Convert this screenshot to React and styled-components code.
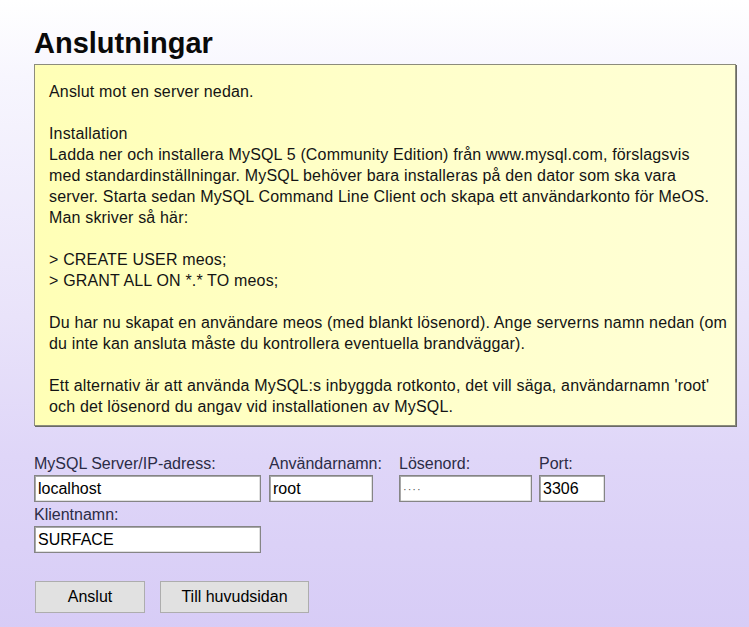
import React from "react";
import styled, { createGlobalStyle } from "styled-components";

const GlobalStyle = createGlobalStyle`
  html, body, #root {
    margin: 0;
    padding: 0;
    height: 100%;
  }
  body {
    font-family: "Liberation Sans", Arial, sans-serif;
  }
`;

const infoLines = [
  "Anslut mot en server nedan.",
  "",
  "Installation",
  "Ladda ner och installera MySQL 5 (Community Edition) från www.mysql.com, förslagsvis",
  "med standardinställningar. MySQL behöver bara installeras på den dator som ska vara",
  "server. Starta sedan MySQL Command Line Client och skapa ett användarkonto för MeOS.",
  "Man skriver så här:",
  "",
  "> CREATE USER meos;",
  "> GRANT ALL ON *.* TO meos;",
  "",
  "Du har nu skapat en användare meos (med blankt lösenord). Ange serverns namn nedan (om",
  "du inte kan ansluta måste du kontrollera eventuella brandväggar).",
  "",
  "Ett alternativ är att använda MySQL:s inbyggda rotkonto, det vill säga, användarnamn 'root'",
  "och det lösenord du angav vid installationen av MySQL.",
];

function App() {
  return (
    <>
      <GlobalStyle />
      <Page>
        <Title>Anslutningar</Title>
        <InfoBox>
          {infoLines.map((line, i) => (
            <InfoLine key={i}>{line || "\u00a0"}</InfoLine>
          ))}
        </InfoBox>

        <FieldRow>
          <Field w={235}>
            <Label>MySQL Server/IP-adress:</Label>
            <Input w={227} defaultValue="localhost" />
          </Field>
          <Field w={130}>
            <Label>Användarnamn:</Label>
            <Input w={104} defaultValue="root" />
          </Field>
          <Field w={140}>
            <Label>Lösenord:</Label>
            <Input w={133} defaultValue="····" masked />
          </Field>
          <Field w={70}>
            <Label>Port:</Label>
            <Input w={66} defaultValue="3306" />
          </Field>
        </FieldRow>

        <FieldRow second>
          <Field w={235}>
            <Label>Klientnamn:</Label>
            <Input w={227} defaultValue="SURFACE" />
          </Field>
        </FieldRow>

        <ButtonRow>
          <Button w={110}>Anslut</Button>
          <Button w={149}>Till huvudsidan</Button>
        </ButtonRow>
      </Page>
    </>
  );
}

export default App;

const Page = styled.div`
  min-height: 100%;
  box-sizing: border-box;
  padding: 27px 12px 20px 34px;
  background: linear-gradient(
    180deg,
    #ffffff 0%,
    #f7f6fe 12%,
    #e9e3fa 50%,
    #dfd6f8 72%,
    #d7ccf6 100%
  );
`;

const Title = styled.h1`
  margin: 0 0 4px 0;
  font-size: 29px;
  line-height: 33px;
  font-weight: bold;
  color: #0a0a0a;
`;

const InfoBox = styled.div`
  width: 702px;
  box-sizing: border-box;
  padding: 16px 0 8px 14px;
  border: 1px solid #8c8c7c;
  box-shadow: 1px 1px 0 #6a6a66;
  background: linear-gradient(90deg, #ffffb6 0%, #ffffc8 45%, #ffffd6 100%);
  color: #141414;
`;

const InfoLine = styled.div`
  font-size: 16px;
  line-height: 21px;
  letter-spacing: 0.17px;
  white-space: nowrap;
`;

const FieldRow = styled.div`
  display: flex;
  margin-top: ${(p) => (p.second ? "4px" : "29px")};
`;

const Field = styled.div`
  display: flex;
  flex-direction: column;
  width: ${(p) => p.w}px;
  flex: none;
`;

const Label = styled.div`
  font-size: 16px;
  line-height: 18px;
  margin-bottom: 2px;
  color: #2c2c46;
  white-space: nowrap;
`;

const Input = styled.input`
  width: ${(p) => p.w}px;
  height: 27px;
  box-sizing: border-box;
  margin: 0;
  padding: 0 0 0 3px;
  border: 1px solid #858585;
  box-shadow: inset 1px 1px 0 #a8a8a8, inset -1px -1px 0 #e0e0e0;
  background: #ffffff;
  font-family: "Liberation Sans", Arial, sans-serif;
  font-size: ${(p) => (p.masked ? "11px" : "16px")};
  letter-spacing: ${(p) => (p.masked ? "1px" : "0")};
  color: ${(p) => (p.masked ? "#555" : "#000")};
  outline: none;
`;

const ButtonRow = styled.div`
  display: flex;
  gap: 15px;
  margin-top: 28px;
  padding-left: 1px;
`;

const Button = styled.button`
  width: ${(p) => p.w}px;
  height: 32px;
  margin: 0;
  padding: 0;
  border: 1px solid #adadad;
  background: #e1e1e1;
  font-family: "Liberation Sans", Arial, sans-serif;
  font-size: 16px;
  color: #000;
  cursor: pointer;
`;
